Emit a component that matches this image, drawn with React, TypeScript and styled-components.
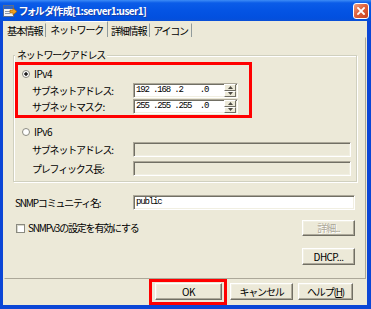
import React from "react";
import styled, { createGlobalStyle } from "styled-components";

const FACE = "#ECE9D8";

const GlobalStyle = createGlobalStyle`
  html, body {
    margin: 0;
    padding: 0;
    background: #ffffff;
  }
  body {
    font-family: "Noto Sans CJK JP", "Noto Sans", sans-serif;
    font-size: 10px;
    letter-spacing: -1.2px;
    color: #000000;
  }
`;

const Window = styled.div`
  width: 371px;
  height: 309px;
  display: flex;
  flex-direction: column;
`;

const TitleBar = styled.div`
  height: 21px;
  flex: none;
  display: flex;
  align-items: center;
  padding: 0 2px 0 3px;
  background: linear-gradient(
    to bottom,
    #3d8cf6 0%,
    #0b5ce8 14%,
    #0454e4 50%,
    #0250df 85%,
    #0a4fd6 100%
  );
`;

const TitleText = styled.span`
  margin-left: 2px;
  color: #ffffff;
  font-weight: bold;
  font-size: 10px;
  font-feature-settings: "palt";
  letter-spacing: -0.6px;
  line-height: 12px;
  white-space: nowrap;
  text-shadow: 1px 1px 0 #1a3fa8;
`;

const CloseButton = styled.div`
  margin-left: auto;
  width: 16px;
  height: 16px;
  box-sizing: border-box;
  border: 1px solid #ffffff;
  border-radius: 3px;
  background: linear-gradient(135deg, #f0a080 0%, #e0623e 45%, #c8401c 100%);
  display: flex;
  align-items: center;
  justify-content: center;
`;

const Frame = styled.div`
  flex: 1;
  display: flex;
  flex-direction: column;
  background: ${FACE};
  border: solid #0b46d6;
  border-width: 0 4px 4px 3px;
`;

const TabStrip = styled.div`
  height: 16px;
  flex: none;
  display: flex;
  align-items: flex-end;
  padding-left: 1px;
`;

const Tab = styled.div<{ $active?: boolean }>`
  height: ${(p) => (p.$active ? 16 : 14)}px;
  box-sizing: border-box;
  display: flex;
  align-items: center;
  padding: 0 ${(p) => (p.$active ? 4 : 3)}px;
  border-right: 1px solid #919b9c;
  border-top: 1px solid ${(p) => (p.$active ? "#ffffff" : "transparent")};
  background: ${FACE};
  white-space: nowrap;
  line-height: 12px;
`;

const TabPanel = styled.div`
  flex: 1;
  display: flex;
  flex-direction: column;
  margin: 0 1px;
  padding: 11px 8px 0 8px;
  border: 1px solid;
  border-color: ${FACE} #aca899 #aca899 ${FACE};
`;

const GroupBox = styled.fieldset`
  margin: 0;
  min-width: 0;
  padding: 1px 4px 5px 1px;
  border: 1px solid #d0d0bf;
  box-shadow: 1px 1px 0 #ffffff, inset 1px 1px 0 #ffffff;
`;

const GroupLegend = styled.legend`
  padding: 0 2px;
  line-height: 12px;
  background: ${FACE};
`;

const Highlight = styled.div<{ $pad?: string }>`
  border: 3px solid #ff0000;
  padding: ${(p) => p.$pad ?? "0"};
  display: flex;
  flex-direction: column;
`;

const OptionRow = styled.div<{ $indent: number }>`
  height: 14px;
  display: flex;
  align-items: center;
  gap: 4px;
  padding-left: ${(p) => p.$indent}px;
  line-height: 12px;
  letter-spacing: -0.5px;
`;

const Radio = styled.span<{ $checked?: boolean }>`
  width: 8px;
  height: 8px;
  flex: none;
  box-sizing: border-box;
  border-radius: 50%;
  border: 1px solid #8a8a80;
  background: ${(p) =>
    p.$checked ? "radial-gradient(circle, #1d1d1d 0 1.4px, #ffffff 2px)" : "#ffffff"};
`;

const FieldRow = styled.div<{ $label: number; $field: number; $indent: number }>`
  display: grid;
  grid-template-columns: ${(p) => p.$label}px ${(p) => p.$field}px;
  align-items: center;
  padding-left: ${(p) => p.$indent}px;
  line-height: 12px;
  white-space: nowrap;
`;

const TextBox = styled.div<{ $disabled?: boolean }>`
  height: 15px;
  box-sizing: border-box;
  display: flex;
  align-items: center;
  padding-left: 2px;
  border: 1px solid;
  border-color: #aca899 #ffffff #ffffff #aca899;
  box-shadow: inset 1px 1px 0 #716f64, inset -1px -1px 0 #f1efe2;
  background: ${(p) => (p.$disabled ? FACE : "#ffffff")};
`;

const MonoText = styled.span`
  font-family: "Liberation Mono", "DejaVu Sans Mono", monospace;
  font-size: 9px;
  letter-spacing: -1.15px;
  white-space: pre;
  line-height: 11px;
`;

const Spinner = styled.div`
  margin-left: auto;
  margin-right: 1px;
  width: 12px;
  height: 13px;
  display: flex;
  flex-direction: column;
`;

const SpinButton = styled.div`
  flex: 1;
  box-sizing: border-box;
  border: 1px solid;
  border-color: #ffffff #716f64 #716f64 #ffffff;
  background: ${FACE};
  display: flex;
  align-items: center;
  justify-content: center;
`;

const SettingRow = styled.div<{ $top: number }>`
  margin-top: ${(p) => p.$top}px;
  padding: 0 2px;
  display: flex;
  align-items: center;
  justify-content: space-between;
  line-height: 12px;
  white-space: nowrap;
`;

const CheckLabel = styled.span`
  display: flex;
  align-items: center;
  gap: 3px;
  padding-left: 1px;
`;

const CheckBox = styled.span`
  width: 9px;
  height: 9px;
  box-sizing: border-box;
  border: 1px solid #8a8a80;
  background: #ffffff;
  box-shadow: inset 1px 1px 0 #d8d8cc;
`;

const PushButton = styled.button<{ $width: number; $height?: number; $tracking?: number }>`
  width: ${(p) => p.$width}px;
  height: ${(p) => p.$height ?? 17}px;
  flex: none;
  padding: 0;
  box-sizing: border-box;
  font-family: inherit;
  font-size: 10px;
  letter-spacing: ${(p) => p.$tracking ?? -1.2}px;
  line-height: 12px;
  color: #000000;
  background: ${FACE};
  border: 1px solid;
  border-color: #ffffff #716f64 #716f64 #ffffff;
  box-shadow: inset -1px -1px 0 #aca899, inset 1px 1px 0 #f1efe2;

  &:disabled {
    color: #aca899;
    text-shadow: 1px 1px 0 #ffffff;
  }
`;

const ButtonBar = styled.div`
  height: 26px;
  flex: none;
  display: flex;
  align-items: flex-start;
  justify-content: flex-end;
  gap: 5px;
  padding-right: 14px;
`;

const BarButtonSlot = styled.div<{ $left?: number }>`
  margin-top: 4px;
  margin-left: ${(p) => p.$left ?? 0}px;
`;

const TitleIcon = () => (
  <svg width="14" height="14" viewBox="0 0 14 14">
    <rect x="0.5" y="1.5" width="10" height="11" fill="#f4f4f4" stroke="#5a6c8c" />
    <rect x="1" y="2" width="9" height="3" fill="#2d64c8" />
    <rect x="2" y="7" width="6" height="1" fill="#8a96aa" />
    <rect x="2" y="9" width="5" height="1" fill="#8a96aa" />
    <path d="M7 6 h3 v-2 l4 3.5 l-4 3.5 v-2 h-3 z" fill="#f0a020" stroke="#9a5a00" strokeWidth="0.6" />
  </svg>
);

const CloseGlyph = () => (
  <svg width="8" height="8" viewBox="0 0 8 8">
    <path d="M1 1 L7 7 M7 1 L1 7" stroke="#ffffff" strokeWidth="1.8" strokeLinecap="square" />
  </svg>
);

const Arrow = ({ up }: { up?: boolean }) => (
  <svg width="5" height="3" viewBox="0 0 5 3">
    <path d={up ? "M2.5 0 L5 3 L0 3 z" : "M0 0 L5 0 L2.5 3 z"} fill="#4d4b43" />
  </svg>
);

const IpField = ({ value }: { value: string }) => (
  <TextBox>
    <MonoText>{value}</MonoText>
    <Spinner>
      <SpinButton>
        <Arrow up />
      </SpinButton>
      <SpinButton>
        <Arrow />
      </SpinButton>
    </Spinner>
  </TextBox>
);

const App = () => {
  return (
    <>
      <GlobalStyle />
      <Window>
        <TitleBar>
          <TitleIcon />
          <TitleText>フォルダ作成[1:server1:user1]</TitleText>
          <CloseButton>
            <CloseGlyph />
          </CloseButton>
        </TitleBar>
        <Frame>
          <TabStrip>
            <Tab>基本情報</Tab>
            <Tab $active>ネットワーク</Tab>
            <Tab>詳細情報</Tab>
            <Tab>アイコン</Tab>
          </TabStrip>
          <TabPanel>
            <GroupBox>
              <GroupLegend>ネットワークアドレス</GroupLegend>
              <Highlight $pad="2px 0 1px 0" style={{ width: 231 }}>
                <OptionRow $indent={4}>
                  <Radio $checked />
                  IPv4
                </OptionRow>
                <FieldRow $indent={14} $label={101} $field={105} style={{ marginTop: 2 }}>
                  サブネットアドレス:
                  <IpField value="192 .168 .2    .0" />
                </FieldRow>
                <FieldRow $indent={14} $label={101} $field={105} style={{ marginTop: 1 }}>
                  サブネットマスク:
                  <IpField value="255 .255 .255  .0" />
                </FieldRow>
              </Highlight>
              <OptionRow $indent={7} style={{ marginTop: 7 }}>
                <Radio />
                IPv6
              </OptionRow>
              <FieldRow $indent={17} $label={101} $field={218} style={{ marginTop: 3 }}>
                サブネットアドレス:
                <TextBox $disabled />
              </FieldRow>
              <FieldRow $indent={17} $label={101} $field={218} style={{ marginTop: 4 }}>
                プレフィックス長:
                <TextBox $disabled />
              </FieldRow>
            </GroupBox>
            <SettingRow $top={13}>
              SNMPコミュニティ名:
              <TextBox style={{ width: 222 }}>
                <MonoText>public</MonoText>
              </TextBox>
            </SettingRow>
            <SettingRow $top={10}>
              <CheckLabel>
                <CheckBox />
                SNMPv3の設定を有効にする
              </CheckLabel>
              <PushButton $width={53} $height={16} disabled>
                詳細...
              </PushButton>
            </SettingRow>
            <SettingRow $top={12} style={{ justifyContent: "flex-end" }}>
              <PushButton $width={53} $tracking={-0.6}>
                DHCP...
              </PushButton>
            </SettingRow>
          </TabPanel>
          <ButtonBar>
            <Highlight $pad="1px 2px 2px 3px">
              <PushButton $width={67} $tracking={-0.4}>
                OK
              </PushButton>
            </Highlight>
            <BarButtonSlot $left={-2}>
              <PushButton $width={63}>キャンセル</PushButton>
            </BarButtonSlot>
            <BarButtonSlot>
              <PushButton $width={55}>
                ヘルプ(<u>H</u>)
              </PushButton>
            </BarButtonSlot>
          </ButtonBar>
        </Frame>
      </Window>
    </>
  );
};

export default App;
